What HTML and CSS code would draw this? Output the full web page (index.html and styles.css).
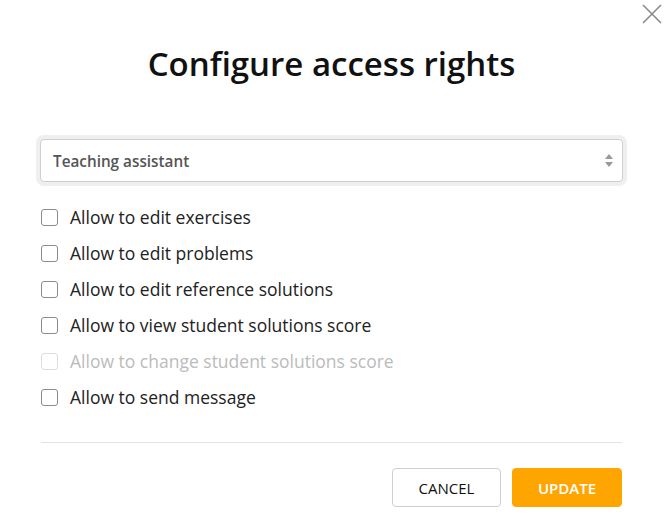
FILE: index.html
```html
<!DOCTYPE html>
<html>
<head>
<meta charset="utf-8">
<link rel="stylesheet" href="styles.css">
</head>
<body>
<div class="modal">
  <button class="close" aria-label="Close">
    <svg width="20" height="20" viewBox="0 0 20 20"><path d="M1 1L19 19M19 1L1 19" stroke="#8a8a8a" stroke-width="1.6" fill="none"/></svg>
  </button>
  <h1 class="title">Configure access rights</h1>
  <div class="select-ring">
    <div class="select">
      <span>Teaching assistant</span>
      <svg class="arrows" width="8" height="13" viewBox="0 0 8 13"><path d="M4 0L8 5H0Z M4 13L8 8H0Z" fill="#999"/></svg>
    </div>
  </div>
  <ul class="options">
    <li><span class="box"></span>Allow to edit exercises</li>
    <li><span class="box"></span>Allow to edit problems</li>
    <li><span class="box"></span>Allow to edit reference solutions</li>
    <li><span class="box"></span>Allow to view student solutions score</li>
    <li class="disabled"><span class="box"></span>Allow to change student solutions score</li>
    <li><span class="box"></span>Allow to send message</li>
  </ul>
  <div class="footer">
    <button class="btn btn-cancel">CANCEL</button>
    <button class="btn btn-update">UPDATE</button>
  </div>
</div>
</body>
</html>
```
FILE: styles.css
```css
* { box-sizing: border-box; }
html, body { margin: 0; padding: 0; background: #fff; }
body { font-family: "Open Sans", "Noto Sans", sans-serif; color: #222; width: 664px; height: 531px; overflow: hidden; }
.modal { position: relative; padding: 0 42px 0 41px; }
.close { position: absolute; top: 4px; right: 2px; background: none; border: 0; padding: 0; width: 20px; height: 20px; }
.close svg { display: block; }
.title { margin: 0; padding-top: 42px; text-align: center; font-size: 33px; font-weight: 600; color: #111; line-height: 44px; letter-spacing: 0; }
.select-ring { margin: 49px -5px 0; padding: 4px; border-radius: 8px; background: #efefef; }
.select { display: flex; align-items: center; justify-content: space-between; height: 43px; border: 1px solid #cfcfcf; border-radius: 4px; background: #fff; padding: 0 9px 0 12px; font-size: 15.3px; font-weight: 600; color: #555; }
.arrows { display: block; }
.options { list-style: none; margin: 13px 0 0; padding: 0; }
.options li { display: flex; align-items: center; height: 36px; font-size: 17.5px; color: #222; }
.box { width: 17px; height: 17px; border: 1px solid #8c8c8c; border-radius: 3px; margin-right: 12px; flex: none; }
.options li.disabled { color: #bbb; }
.options li.disabled .box { border-color: #ddd; }
.footer { margin-top: 27px; border-top: 1px solid #e3e3e3; padding-top: 25px; display: flex; justify-content: flex-end; gap: 11px; }
.btn { width: 110px; height: 39px; border-radius: 4px; font-family: inherit; font-size: 15px; padding: 0; }
.btn-cancel { width: 109px; background: #fff; border: 1px solid #cfcfcf; color: #111; }
.btn-update { background: #ffa500; border: 1px solid #ffa500; color: #fff; font-weight: 600; }
```
